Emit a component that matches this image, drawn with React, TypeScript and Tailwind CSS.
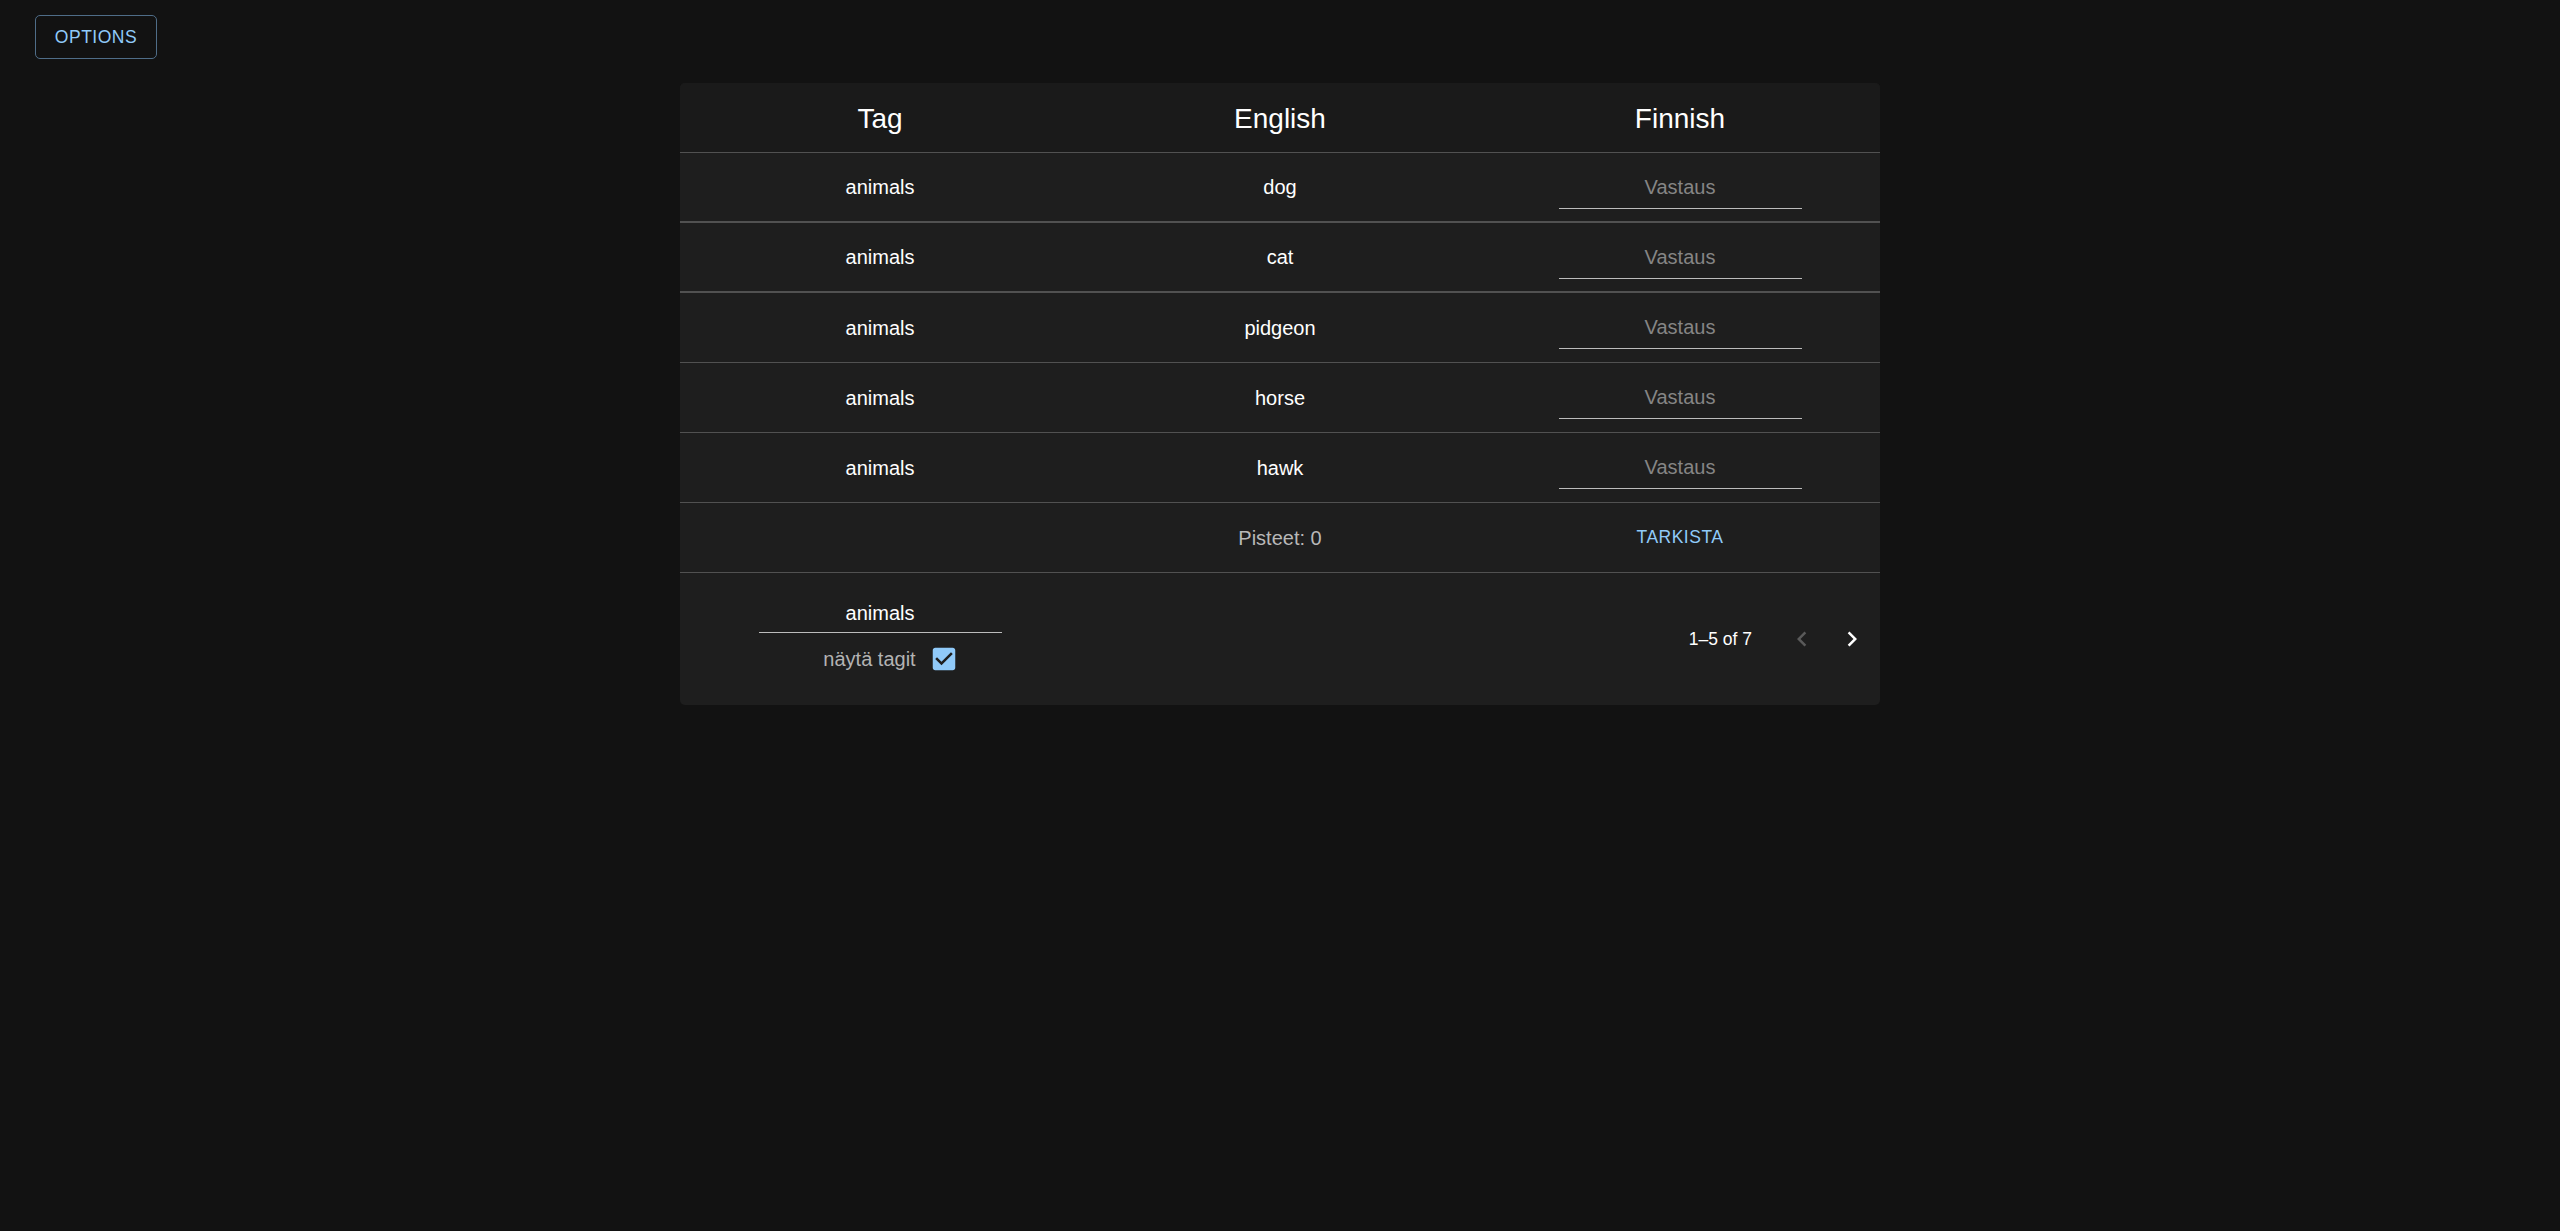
import React from 'react'

const rows = [
  { tag: 'animals', en: 'dog' },
  { tag: 'animals', en: 'cat' },
  { tag: 'animals', en: 'pidgeon' },
  { tag: 'animals', en: 'horse' },
  { tag: 'animals', en: 'hawk' },
]

function ChevronLeft({ className }: { className?: string }) {
  return (
    <svg viewBox="0 0 24 24" className={className} fill="currentColor">
      <path d="M15.41 16.59 10.83 12l4.58-4.59L14 6l-6 6 6 6z" />
    </svg>
  )
}

function ChevronRight({ className }: { className?: string }) {
  return (
    <svg viewBox="0 0 24 24" className={className} fill="currentColor">
      <path d="M8.59 16.59 13.17 12 8.59 7.41 10 6l6 6-6 6z" />
    </svg>
  )
}

function CheckedBox() {
  return (
    <svg viewBox="0 0 24 24" className="h-[30px] w-[30px]">
      <rect x="5" y="5" width="14" height="14" fill="#1e1e1e" />
      <path
        fill="#90caf9"
        d="M19 3H5c-1.11 0-2 .9-2 2v14c0 1.1.89 2 2 2h14c1.11 0 2-.9 2-2V5c0-1.1-.89-2-2-2zm-9 14l-5-5 1.41-1.41L10 14.17l7.59-7.59L19 8l-9 9z"
      />
    </svg>
  )
}

export default function App() {
  return (
    <div
      className="min-h-screen bg-[#121212] pt-[15px] text-white"
      style={{ fontFamily: '"Liberation Sans", Arial, sans-serif' }}
    >
      <div className="pl-[35px]">
        <button
          type="button"
          className="h-[44px] w-[122px] rounded-[5px] border border-[#4f6d88] text-[17.5px] uppercase tracking-[0.5px] text-[#90caf9]"
        >
          Options
        </button>
      </div>

      <div className="mx-auto mt-[24px] w-[1200px] overflow-hidden rounded-[5px] bg-[#1e1e1e]">
        {/* head */}
        <div className="grid h-[70px] grid-cols-3 border-b border-[#515151] bg-[#1a1a1a] pt-[2px] text-[28px]">
          <div className="flex items-center justify-center">Tag</div>
          <div className="flex items-center justify-center">English</div>
          <div className="flex items-center justify-center">Finnish</div>
        </div>

        {rows.map((r, i) => (
          <div
            key={r.en}
            className={
              i < 2
                ? 'grid h-[70px] grid-cols-3 border-b-2 border-[#515151] text-[20px]'
                : 'grid h-[70px] grid-cols-3 border-b border-[#515151] text-[20px]'
            }
          >
            <div className="flex items-center justify-center">{r.tag}</div>
            <div className="flex items-center justify-center">{r.en}</div>
            <div className="flex items-center justify-center">
              <input
                placeholder="Vastaus"
                className="mt-[9px] box-border h-[34px] w-[243px] border-b-[1.5px] border-[#bcbcbc] bg-transparent pb-[8px] text-center text-[20px] text-white outline-none placeholder:text-[#858585]"
              />
            </div>
          </div>
        ))}

        {/* score row */}
        <div className="grid h-[70px] grid-cols-3 border-b border-[#515151]">
          <div />
          <div className="flex items-center justify-center text-[20px] text-[#b8b8b8]">Pisteet: 0</div>
          <div className="flex items-center justify-center">
            <button type="button" className="text-[17.5px] uppercase tracking-[0.5px] text-[#90caf9]">
              Tarkista
            </button>
          </div>
        </div>

        {/* footer */}
        <div className="flex h-[132px]">
          <div className="flex w-[400px] flex-col items-center pt-[26px]">
            <div className="w-[243px] border-b-[1.5px] border-[#bcbcbc] pb-[5px] text-center text-[20px] leading-[28px]">
              animals
            </div>
            <div className="flex h-[52px] items-center pl-[22px]">
              <span className="text-[20px] text-[#b3b3b3]">näytä tagit</span>
              <span className="ml-[13px]">
                <CheckedBox />
              </span>
            </div>
          </div>
          <div className="flex flex-1 items-center justify-end pr-[3px]">
            <span className="text-[17.5px]">1–5 of 7</span>
            <div className="ml-[25px] flex">
              <button type="button" className="flex h-[50px] w-[50px] items-center justify-center text-[#5a5a5a]">
                <ChevronLeft className="h-[30px] w-[30px]" />
              </button>
              <button type="button" className="flex h-[50px] w-[50px] items-center justify-center text-white">
                <ChevronRight className="h-[30px] w-[30px]" />
              </button>
            </div>
          </div>
        </div>
      </div>
    </div>
  )
}
